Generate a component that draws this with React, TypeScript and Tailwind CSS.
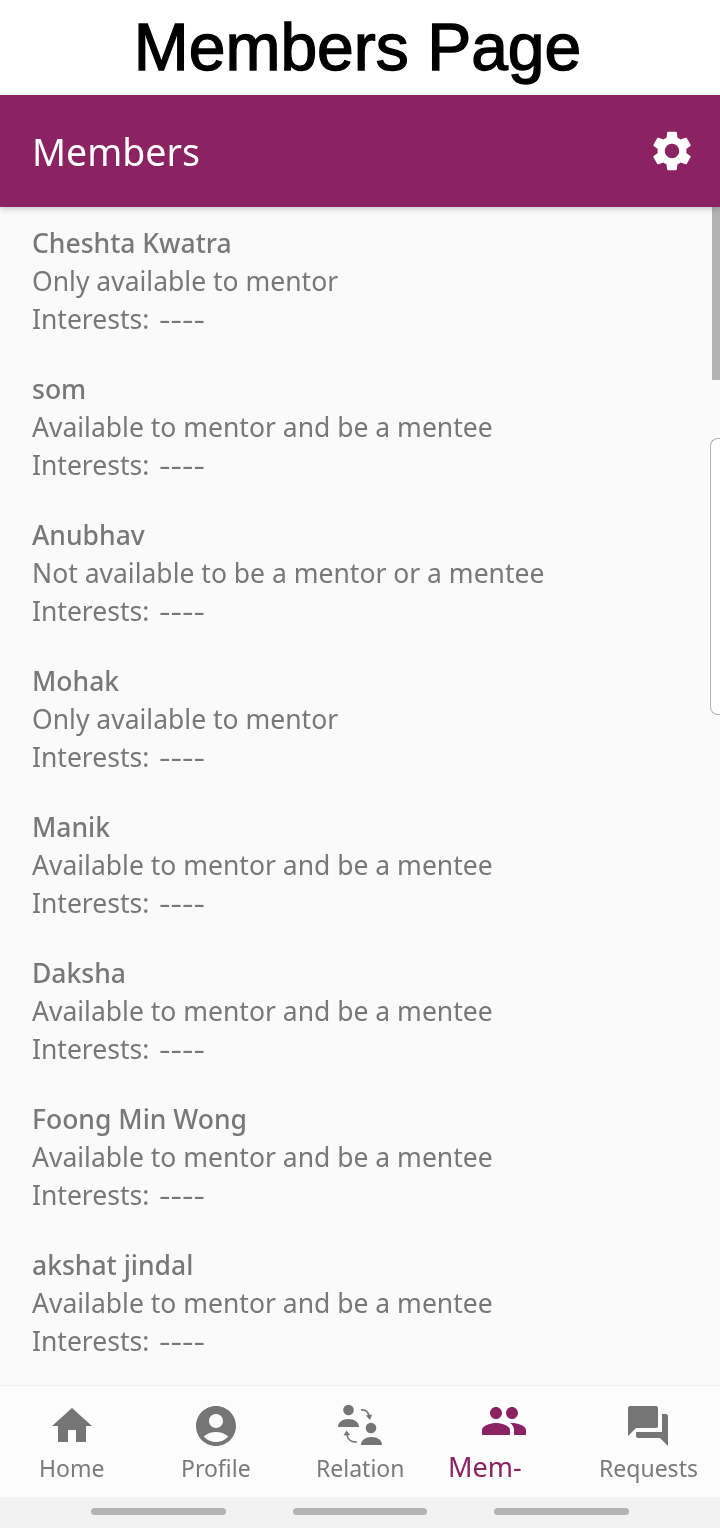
import { MdHome, MdAccountCircle, MdPeople, MdQuestionAnswer, MdSettings } from "react-icons/md";

const members = [
  ["Cheshta Kwatra", "Only available to mentor"],
  ["som", "Available to mentor and be a mentee"],
  ["Anubhav", "Not available to be a mentor or a mentee"],
  ["Mohak", "Only available to mentor"],
  ["Manik", "Available to mentor and be a mentee"],
  ["Daksha", "Available to mentor and be a mentee"],
  ["Foong Min Wong", "Available to mentor and be a mentee"],
  ["akshat jindal", "Available to mentor and be a mentee"],
];

function RelationIcon() {
  return (
    <svg width="48" height="48" viewBox="0 0 48 48" fill="#757575">
      <circle cx="12.500" cy="8" r="5.300" />
      <path d="M2 25c0-5 4.500-8 10.500-8S23 20 23 25z" />
      <circle cx="35" cy="26" r="5.300" />
      <path d="M25 43c0-5 4.500-8 10.500-8S46 38 46 43z" />
      <path d="M25 8c4-.5 7 1.500 8 6" fill="none" stroke="#757575" strokeWidth="1.600" />
      <path d="M30 13.500l4 4.500 2-5.500z" />
      <path d="M21 40c-5 .5-9-2-10-7" fill="none" stroke="#757575" strokeWidth="1.600" />
      <path d="M7.500 33.500l3-5 3.500 4.500z" />
    </svg>
  );
}

function NavItem({ icon, label }: { icon: React.ReactNode; label: string }) {
  return (
    <div className="flex-1 flex flex-col items-center pt-[16px]">
      {icon}
      <span className="text-[23px] leading-[32px] mt-[2px] text-[#7a7a7a] will-change-transform">{label}</span>
    </div>
  );
}

export default function App() {
  return (
    <div className="relative w-[720px] h-[1528px] overflow-hidden flex flex-col bg-white font-['Noto_Sans',sans-serif]">
      <div className="h-[95px] shrink-0 flex items-center justify-center pr-[5px] font-['Liberation_Sans',sans-serif] text-[66px] text-black [-webkit-text-stroke:1.400px_black]">
        Members Page
      </div>
      <header className="h-[112px] shrink-0 bg-[#8b2262] flex items-center justify-between pl-[32px] pr-[24px] shadow-[0_2px_6px_rgba(0,0,0,0.2)] z-10">
        <span className="text-[37.500px] leading-[54px] pt-[2px] text-white will-change-transform">Members</span>
        <MdSettings size={48} color="#fff" />
      </header>
      <main className="flex-1 bg-[#fafafa] pl-[32px] pt-[17px] overflow-hidden">
        {members.map(([name, status]) => (
          <div key={name} className="mb-[32px] text-[26.500px] leading-[38px] text-[#787878] will-change-transform">
            <div className="font-medium">{name}</div>
            <div>{status}</div>
            <div>
              Interests: <span className="inline-block ml-[3px] origin-left scale-x-[1.35]">----</span>
            </div>
          </div>
        ))}
      </main>
      <nav className="h-[112px] shrink-0 bg-[#fcfcfc] border-t border-[#f0f0f0] flex">
        <NavItem icon={<MdHome size={48} color="#757575" />} label="Home" />
        <NavItem icon={<MdAccountCircle size={48} color="#757575" />} label="Profile" />
        <NavItem icon={<RelationIcon />} label="Relation" />
        <div className="flex-1 flex flex-col items-center pt-[11px]">
          <MdPeople size={48} color="#8b2262" />
          <span className="text-[27px] leading-[34px] mt-[5px] mr-[38px] text-[#8b2262] will-change-transform">Mem-</span>
        </div>
        <NavItem icon={<MdQuestionAnswer size={48} color="#757575" />} label="Requests" />
      </nav>
      <div className="h-[31px] shrink-0 bg-[#f2f2f2] flex items-start pt-[11px] pl-[91px] gap-[67px]">
        <div className="w-[134.500px] h-[7px] rounded-full bg-[#b3b3b3]" />
        <div className="w-[134.500px] h-[7px] rounded-full bg-[#b3b3b3]" />
        <div className="w-[134.500px] h-[7px] rounded-full bg-[#b3b3b3]" />
      </div>
      <div className="absolute right-0 top-[207px] w-[8px] h-[173px] bg-[#b3b3b3]" />
      <div className="absolute right-0 top-[438px] w-[10px] h-[277px] bg-white border border-r-0 border-[#b0b0b0] rounded-l-[8px]" />
    </div>
  );
}
